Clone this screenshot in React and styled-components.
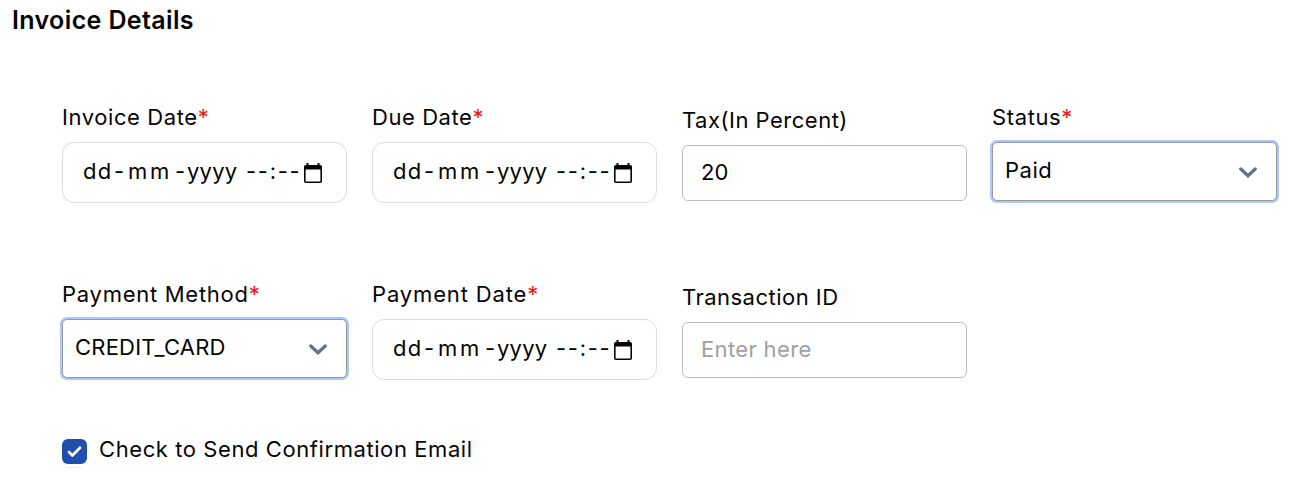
import React from "react";
import styled, { createGlobalStyle } from "styled-components";

const GlobalStyle = createGlobalStyle`
  * { box-sizing: border-box; }
  body {
    margin: 0;
    background: #fff;
    color: #050505;
    font-family: Inter, "Liberation Sans", sans-serif;
    font-size: 22px;
  }
`;

const Page = styled.main`
  height: 493px;
  padding: 5px 36px 0 12px;
  overflow: hidden;
`;

const Title = styled.h1`
  margin: 0 0 65px;
  font-size: 25px;
  font-weight: 600;
  line-height: 31px;
  letter-spacing: 0.37px;
`;

const Fields = styled.div`
  display: grid;
  grid-template-columns: repeat(4, 285px);
  grid-auto-rows: 102px;
  column-gap: 25px;
  row-gap: 75px;
  padding-left: 50px;
`;

const Field = styled.div`
  display: flex;
  flex-direction: column;
  gap: 9px;
  padding-top: ${(p) => (p.$lowered ? 3 : 0)}px;
`;

const Label = styled.label`
  display: flex;
  line-height: 32px;
  white-space: nowrap;
`;

const Text = styled.span`
  white-space: pre;
  letter-spacing: ${(p) => p.$track || 0}px;
`;

const Required = styled.span`
  color: #fb1010;
`;

const Control = styled.div`
  display: flex;
  align-items: center;
  background: #fff;
`;

const DateControl = styled(Control)`
  height: 61px;
  padding: 0 24px 0 20px;
  justify-content: space-between;
  border: 1px solid #dcdcdc;
  border-radius: 12px;
`;

const DateParts = styled.span`
  display: flex;
  padding-bottom: 4px;
  font-feature-settings: "calt" 0;
`;

const DatePart = styled.span`
  width: ${(p) => p.$width}px;
  letter-spacing: ${(p) => p.$track || 0}px;
  white-space: pre;
`;

const TextControl = styled(Control)`
  height: 56px;
  padding: 0 18px 3px;
  border: 1px solid #bfbfbf;
  border-radius: 6px;
  color: ${(p) => (p.$placeholder ? "#a0a0a0" : "inherit")};
`;

const SelectControl = styled(Control)`
  height: 59px;
  padding: 0 18px 0 12px;
  justify-content: space-between;
  border: 1px solid #999;
  border-radius: 5px;
  box-shadow: 0 0 0 2px #a9c8fd;
`;

const SelectValue = styled(Text)`
  padding-bottom: 4px;
`;

const CheckRow = styled.div`
  display: flex;
  align-items: center;
  gap: 12px;
  margin: 49px 0 0 50px;
  line-height: 32px;
`;

const CheckColumn = styled.span`
  display: flex;
  flex-direction: column;
  align-items: center;
  gap: 3px;
  padding-top: 10px;
`;

const CheckBox = styled.span`
  display: grid;
  place-items: center;
  width: 25px;
  height: 25px;
  border-radius: 6px;
  background: #204fae;
`;

const Underline = styled.span`
  width: 15px;
  height: 1px;
  background: #e8edfc;
`;

const CalendarIcon = () => (
  <svg width="18" height="20" viewBox="0 0 18 20" fill="#050505">
    <path
      fillRule="evenodd"
      d="M2.5 0h2v2h9V0h2v2h.7A1.8 1.8 0 0 1 18 3.8v14.4a1.8 1.8 0 0 1-1.8 1.8H1.8A1.8 1.8 0 0 1 0 18.2V3.8A1.8 1.8 0 0 1 1.8 2h.7zM1.6 6.5v11.9h14.8V6.5z"
    />
  </svg>
);

const ChevronIcon = () => (
  <svg width="20" height="12" viewBox="0 0 20 12" fill="none">
    <path d="M2.8 3 10 9.8 17.2 3" stroke="#6b7280" strokeWidth="3.3" strokeLinecap="round" />
  </svg>
);

const CheckIcon = () => (
  <svg width="17" height="13" viewBox="0 0 17 13" fill="none">
    <path d="m3 7 3.4 3.5L14 2.8" stroke="#fff" strokeWidth="2.7" strokeLinecap="round" strokeLinejoin="round" />
  </svg>
);

const FormField = ({ label, track, required, lowered, children }) => (
  <Field $lowered={lowered}>
    <Label>
      <Text $track={track}>{label}</Text>
      {required && <Required>*</Required>}
    </Label>
    {children}
  </Field>
);

const DateInput = () => (
  <DateControl>
    <DateParts>
      <DatePart $width={31} $track={1.2}>dd</DatePart>
      <DatePart $width={14}>-</DatePart>
      <DatePart $width={47} $track={2.8}>mm</DatePart>
      <DatePart $width={12}>-</DatePart>
      <DatePart $width={59} $track={0.2}>yyyy</DatePart>
      <DatePart $width={54} $track={1.7}>--:--</DatePart>
    </DateParts>
    <CalendarIcon />
  </DateControl>
);

const SelectInput = ({ value, track }) => (
  <SelectControl>
    <SelectValue $track={track}>{value}</SelectValue>
    <ChevronIcon />
  </SelectControl>
);

export default function App() {
  return (
    <Page>
      <GlobalStyle />
      <Title>Invoice Details</Title>
      <Fields>
        <FormField label="Invoice Date" track={0.58} required><DateInput /></FormField>
        <FormField label="Due Date" track={0.56} required><DateInput /></FormField>
        <FormField label="Tax(In Percent)" track={0.5} lowered>
          <TextControl><Text>20</Text></TextControl>
        </FormField>
        <FormField label="Status" track={0.62} required><SelectInput value="Paid" track={0.5} /></FormField>
        <FormField label="Payment Method" track={0.73} required><SelectInput value="CREDIT_CARD" track={0.22} /></FormField>
        <FormField label="Payment Date" track={0.86} required><DateInput /></FormField>
        <FormField label="Transaction ID" track={0.48} lowered>
          <TextControl $placeholder><Text $track={0.35}>Enter here</Text></TextControl>
        </FormField>
      </Fields>
      <CheckRow>
        <CheckColumn>
          <CheckBox><CheckIcon /></CheckBox>
          <Underline />
        </CheckColumn>
        <Text $track={0.58}>Check to Send Confirmation Email</Text>
      </CheckRow>
    </Page>
  );
}
